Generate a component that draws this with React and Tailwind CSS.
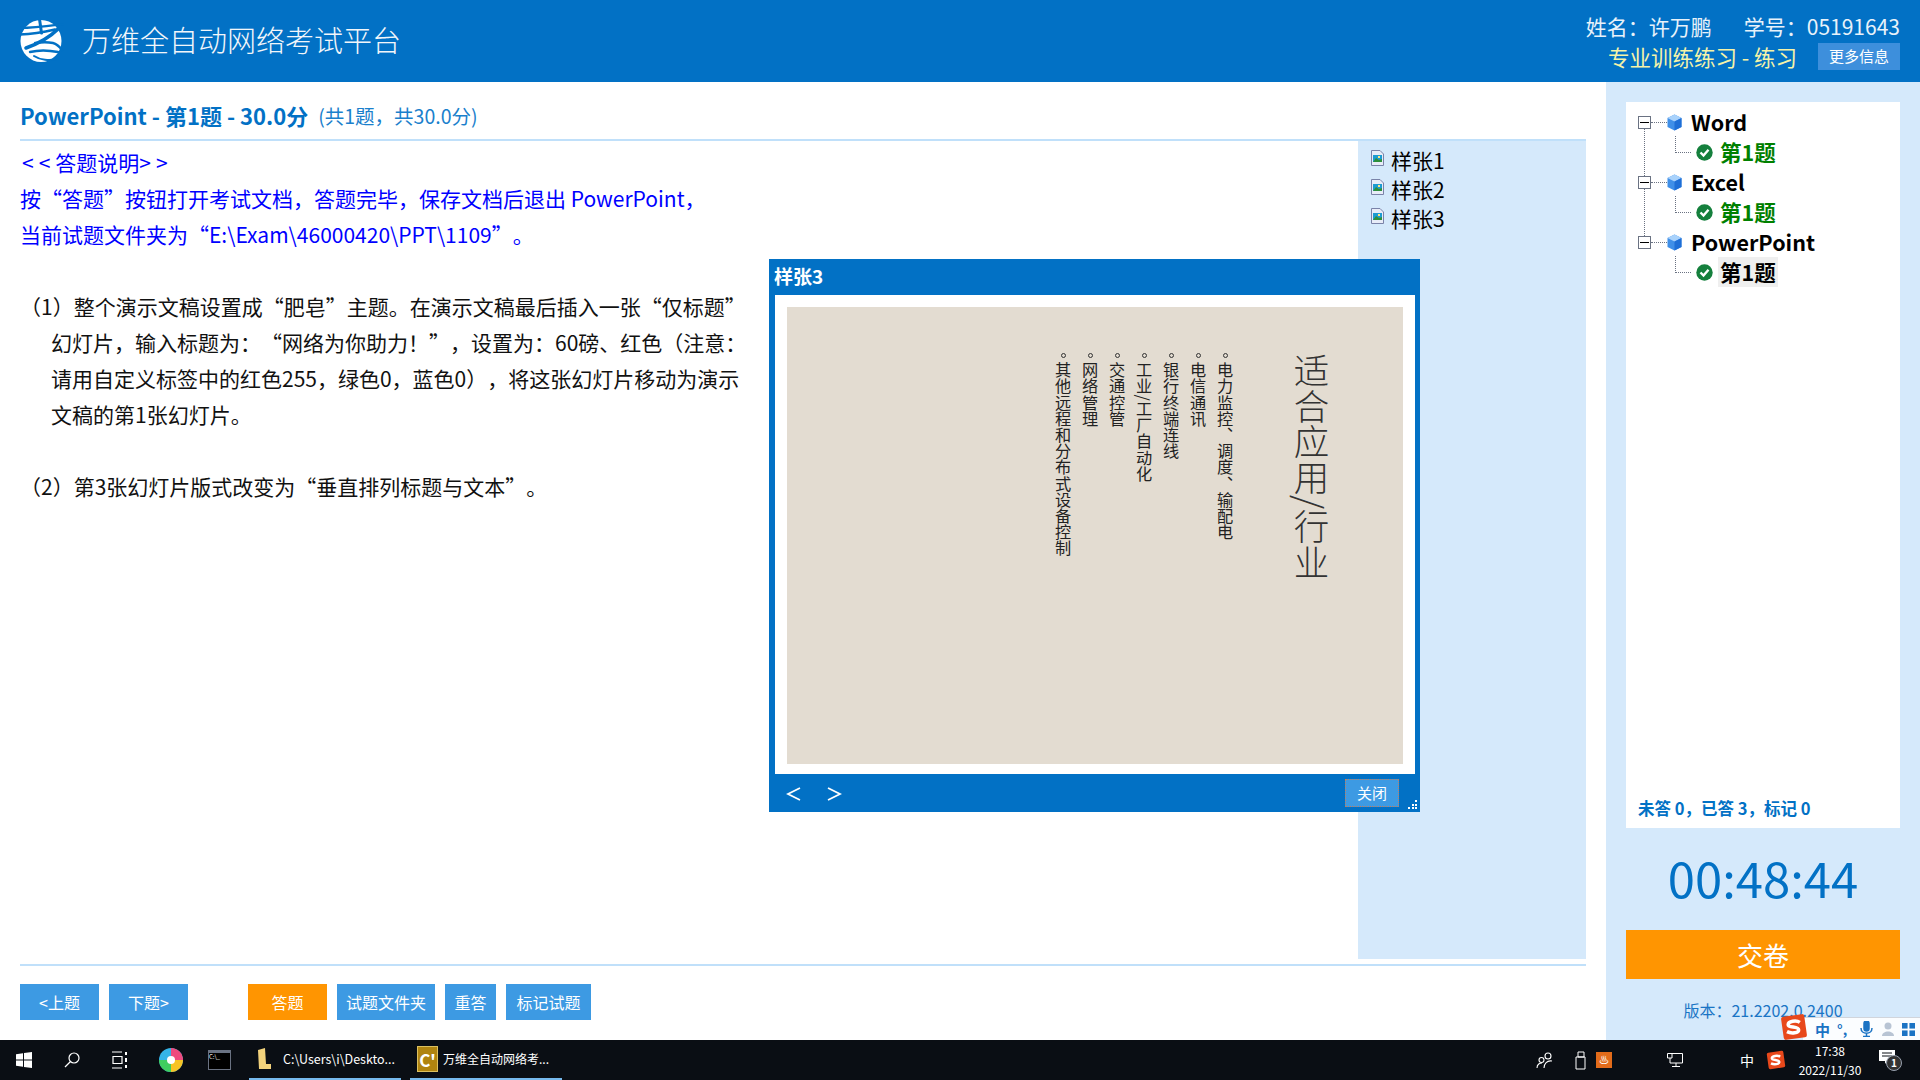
import React from "react";

const font = { fontFamily: '"Noto Sans CJK SC", sans-serif' };

function Logo() {
  return (
    <svg width="44" height="44" viewBox="0 0 44 44">
      <ellipse cx="21" cy="22" rx="20.5" ry="21" fill="#fff" />
      <g fill="none" stroke="#0271c5" strokeLinecap="round">
        <path d="M0 9 C14 9 28 7 44 5" strokeWidth="2.2" />
        <path d="M0 15.5 C12 15 24 13 35 10.5" strokeWidth="2.4" />
        <path d="M19.5 0 L21.5 14" strokeWidth="3" />
        <path d="M38 10 C30 18 20 24 6 29" strokeWidth="3.6" />
        <path d="M15 24 C22 23 28 23 33 24 C37 25 39 27 42 31" strokeWidth="2.4" />
        <path d="M10 33 C18 31 28 31 38 33" strokeWidth="2.4" />
        <path d="M14 37 C20 41 30 42 36 40" strokeWidth="2" />
      </g>
    </svg>
  );
}

function Cube() {
  return (
    <svg width="15" height="17" viewBox="0 0 15 17">
      <path d="M7.5 0.5 L14.5 4 L14.5 13 L7.5 16.5 L0.5 13 L0.5 4Z" fill="#3f8fe8" />
      <path d="M7.5 0.5 L14.5 4 L7.5 7.5 L0.5 4Z" fill="#a9d2fb" />
      <path d="M7.5 7.5 L14.5 4 L14.5 13 L7.5 16.5Z" fill="#1f6fd6" />
    </svg>
  );
}

function Check() {
  return (
    <svg width="17" height="17" viewBox="0 0 17 17">
      <circle cx="8.5" cy="8.5" r="8.2" fill="#15803d" />
      <path d="M4.5 8.5 L7.5 11.5 L12.5 5.8" fill="none" stroke="#fff" strokeWidth="2.4" />
    </svg>
  );
}

function PicFile() {
  return (
    <svg width="13" height="16" viewBox="0 0 13 16">
      <path d="M0.5 0.5 H9 L12.5 4 V15.5 H0.5Z" fill="#e8ecf8" stroke="#7a83a8" />
      <rect x="2" y="5" width="9" height="7" fill="#1d9bd1" />
      <path d="M2 12 L5 8 L8 10 L11 9 V12Z" fill="#2f8f3a" />
      <rect x="7" y="6" width="2" height="2" fill="#ffe680" />
    </svg>
  );
}

function TreeGroup({ name, selected }) {
  return (
    <div>
      <div className="h-[30px] flex items-center">
        <span className="w-[13px] h-[13px] border border-gray-500 bg-white flex items-center justify-center">
          <span className="w-[9px] h-[1px] bg-black"></span>
        </span>
        <span className="w-4 border-t border-dotted border-gray-500"></span>
        <Cube />
        <span className="ml-[9px] text-[21.5px] font-bold text-black">{name}</span>
      </div>
      <div className="h-[30px] flex items-center pl-[37px]">
        <span className="w-[16px] h-[17px] mb-[16px] border-l border-b border-dotted border-gray-500"></span>
        <span className="ml-[5px]"><Check /></span>
        <span
          className={
            selected
              ? "ml-[5px] px-[2px] text-[21.5px] leading-[30px] font-bold text-black bg-[#efefef]"
              : "ml-[5px] px-[2px] text-[21.5px] leading-[30px] font-bold text-[#008000]"
          }
        >
          第1题
        </span>
      </div>
    </div>
  );
}

function ActionButton({ label, orange, width }) {
  return (
    <button
      className={
        (orange ? "bg-[#ff9501] " : "bg-[#3d9ae3] ") +
        "h-9 text-white text-[16px] flex items-center justify-center"
      }
      style={{ width }}
    >
      {label}
    </button>
  );
}

function SlideColumn({ text, mr }) {
  return (
    <div className={"flex flex-col items-center w-[16px] " + mr}>
      <span className="w-[5px] h-[5px] rounded-full border border-[#333] mb-[4px]"></span>
      <span className="[writing-mode:vertical-rl] text-[16.2px] leading-[16px] text-[#222] whitespace-nowrap">
        {text}
      </span>
    </div>
  );
}

function SogouIcon({ size }) {
  return (
    <svg width={size} height={size} viewBox="0 0 24 24">
      <rect x="2" y="2" width="20" height="20" rx="2" fill="#e8481b" transform="rotate(-8 12 12)" />
      <path d="M17 8 C14 6 7 7 7 10 C7 13 16 11 16 14.5 C16 17 10 18 6 16" fill="none" stroke="#fff" strokeWidth="3" />
    </svg>
  );
}

function Taskbar() {
  return (
    <div className="h-10 bg-[#0a0e14] flex items-center text-white relative">
      <svg className="ml-4" width="16" height="16" viewBox="0 0 16 16">
        <path d="M0 2.2 L7 1.2 V7.5 H0Z M8 1 L16 0 V7.5 H8Z M0 8.5 H7 V14.8 L0 13.8Z M8 8.5 H16 V16 L8 15Z" fill="#fff" />
      </svg>
      <svg className="ml-8" width="16" height="16" viewBox="0 0 16 16" fill="none" stroke="#fff" strokeWidth="1.2">
        <circle cx="10" cy="6" r="5" />
        <path d="M6.5 9.5 L1 15" />
      </svg>
      <svg className="ml-8" width="16" height="18" viewBox="0 0 16 18" fill="none" stroke="#fff" strokeWidth="1.2">
        <path d="M0 1 H10 M0 17 H10 M1 5.5 H10 V12.5 H1Z" />
        <path d="M14 1 V4 M14 7 V11 M14 14 V17" strokeWidth="2" />
      </svg>
      <svg className="ml-[31px]" width="24" height="28" viewBox="0 0 24 28">
        <circle cx="12" cy="14" r="12" fill="#34b4e8" />
        <path d="M12 2 A12 12 0 0 1 24 14 L12 14Z" fill="#ee4b7e" />
        <path d="M24 14 A12 12 0 0 1 12 26 L12 14Z" fill="#f7c325" />
        <path d="M12 26 A12 12 0 0 1 0 14 L12 14Z" fill="#3fce5f" />
        <circle cx="12" cy="14" r="4" fill="#fff" />
      </svg>
      <div className="ml-[25px] w-[23px] h-[20px] bg-black border border-gray-500 border-t-[3px] flex">
        <span className="text-[6px] leading-[8px] text-white">C:\_</span>
      </div>
      <div className="absolute left-[249px] top-0 h-10 w-[152px] border-b-2 border-[#76b9ed] flex items-center">
        <svg className="ml-2" width="14" height="22" viewBox="0 0 14 22">
          <path d="M1 2 L8 0 L9 16 H14 V21 H2Z" fill="#f2d27c" />
        </svg>
        <span className="ml-[12px] text-[12.5px] whitespace-nowrap">C:\Users\i\Deskto...</span>
      </div>
      <div className="absolute left-[410px] top-0 h-10 w-[152px] border-b-2 border-[#76b9ed] flex items-center">
        <div className="ml-[7px] w-[21px] h-[26px] bg-[#b08410] border border-[#dcc060] flex items-center justify-center text-[17px] leading-none font-bold text-white">
          C'
        </div>
        <span className="ml-[5px] text-[12px] whitespace-nowrap">万维全自动网络考...</span>
      </div>

      <div className="ml-auto flex items-center h-full">
        <svg width="18" height="18" viewBox="0 0 18 18" fill="none" stroke="#fff" strokeWidth="1.1">
          <circle cx="12" cy="5" r="3" />
          <circle cx="5.5" cy="9" r="2.5" />
          <path d="M1 17 C1 13 4 12 6 12 M8 17 C8 13 11 9 16 10" />
        </svg>
        <svg className="ml-[21px]" width="14" height="19" viewBox="0 0 14 19" fill="none" stroke="#fff" strokeWidth="1">
          <path d="M3 1 H9 V6 H3Z M1 6 H10 V18 H1Z" />
        </svg>
        <div className="ml-[7px] w-4 h-4 bg-[#e26b1a] flex items-center justify-center text-[10px] leading-none">♨</div>
        <svg className="ml-[55px]" width="16" height="14" viewBox="0 0 16 14" fill="none" stroke="#fff" strokeWidth="1">
          <path d="M3 0.5 H15.5 V10 H3 M0.5 0.5 H5 V5 H0.5Z M3 5 V10 M9 10 V13.5 M5 13.5 H13" />
        </svg>
        <span className="ml-[57px] text-[14px]">中</span>
        <span className="ml-[12px] flex"><SogouIcon size={20} /></span>
        <div className="ml-[4px] w-[80px] text-center text-[12px] leading-[19px]">
          <div>17:38</div>
          <div>2022/11/30</div>
        </div>
        <div className="ml-[9px] mr-[21px] relative w-5 h-5">
          <svg width="16" height="15" viewBox="0 0 16 15">
            <path d="M0 0 H16 V11 H8 L6 14 V11 H0Z" fill="#fff" />
            <path d="M3 3 H13 M3 6 H13" stroke="#0a0e14" />
          </svg>
          <span className="absolute left-[7px] top-[5px] w-4 h-4 rounded-full bg-[#333] border border-gray-400 text-[10px] leading-[14px] text-center font-bold">1</span>
        </div>
      </div>
    </div>
  );
}

export default function App() {
  return (
    <div className="w-[1920px] h-[1080px] flex flex-col overflow-hidden relative bg-white [text-spacing-trim:space-all]" style={font}>
      <header className="h-[82px] bg-[#0271c5] flex items-center justify-between pl-[20px] pr-5">
        <div className="flex items-center">
          <Logo />
          <span className="ml-[18px] -mt-[2px] text-[29px] font-light text-[#f2f6fa]">万维全自动网络考试平台</span>
        </div>
        <div className="flex flex-col items-end">
          <div className="text-[21px] leading-[30px] text-[#e8f2fa] flex gap-[32px] -mt-[2px]">
            <span>姓名：许万鹏</span>
            <span>学号：05191643</span>
          </div>
          <div className="flex items-center mt-[2px]">
            <span className="text-[21.5px] leading-[27px] text-[#f5f3a8]">专业训练练习 - 练习</span>
            <button className="ml-[21px] w-[82px] h-[27px] bg-[#3d8fdc] text-[15px] text-white flex items-center justify-center">
              更多信息
            </button>
          </div>
        </div>
      </header>

      <div className="flex-1 flex min-h-0">
        <main className="w-[1606px] px-5 flex flex-col">
          <div className="h-[59px] shrink-0 border-b-2 border-[#c0e0fa] flex items-center pt-[10px]">
            <span className="text-[22px] font-bold text-[#0271c5]">PowerPoint - 第1题 - 30.0分</span>
            <span className="ml-[10px] text-[19.5px] text-[#1a80cc]">(共1题，共30.0分)</span>
          </div>
          <div className="h-[825px] shrink-0 flex border-b-2 border-[#c0e0fa]">
            <div className="flex-1 pt-[3px] mb-[5px] text-[21px] leading-[36px]">
              <div className="text-[#0000ff] whitespace-nowrap">
                <div>
                  <span className="tracking-[5px] ml-[2px]">&lt;&lt;</span>答题说明<span className="tracking-[5px]">&gt;&gt;</span>
                </div>
                <div>按“答题”按钮打开考试文档，答题完毕，保存文档后退出 PowerPoint，</div>
                <div>当前试题文件夹为“E:\Exam\46000420\PPT\1109”。</div>
              </div>
              <div className="mt-[36px] text-[#111] whitespace-nowrap">
                <div>（1）整个演示文稿设置成“肥皂”主题。在演示文稿最后插入一张“仅标题”</div>
                <div className="pl-[31px]">幻灯片，输入标题为：“网络为你助力！”，设置为：60磅、红色（注意：</div>
                <div className="pl-[31px]">请用自定义标签中的红色255，绿色0，蓝色0），将这张幻灯片移动为演示</div>
                <div className="pl-[31px]">文稿的第1张幻灯片。</div>
                <div className="mt-[36px]">（2）第3张幻灯片版式改变为“垂直排列标题与文本”。</div>
              </div>
            </div>
            <div className="w-[228px] mb-[5px] bg-[#d5e9fb] pl-[13px] pt-[5px]">
              {["样张1", "样张2", "样张3"].map((s) => (
                <div key={s} className="h-[29px] flex items-center text-[21px] text-black">
                  <span className="mb-[6px] flex"><PicFile /></span>
                  <span className="ml-[7px]">{s}</span>
                </div>
              ))}
            </div>
          </div>
          <div className="flex-1 flex items-center gap-[10px] pb-[2px]">
            <ActionButton label="<上题" width={79} />
            <ActionButton label="下题>" width={79} />
            <span className="w-[40px]"></span>
            <ActionButton label="答题" orange width={79} />
            <ActionButton label="试题文件夹" width={98} />
            <ActionButton label="重答" width={51} />
            <ActionButton label="标记试题" width={85} />
          </div>
        </main>

        <aside className="flex-1 bg-[#d5e9fb] px-5 pt-5 flex flex-col items-stretch">
          <div className="h-[726px] bg-white flex flex-col justify-between px-3 pt-[5px] pb-[7px]">
            <div className="relative">
              <span className="absolute left-[6px] top-[15px] h-[120px] border-l border-dotted border-gray-500"></span>
              <div className="relative">
                <TreeGroup name="Word" />
                <TreeGroup name="Excel" />
                <TreeGroup name="PowerPoint" selected />
              </div>
            </div>
            <div className="text-[16.5px] font-bold text-[#0271c5]">未答 0，已答 3，标记 0</div>
          </div>
          <div className="h-[102px] pb-[5px] flex items-center justify-center text-[49px] text-[#0271c5]">00:48:44</div>
          <button className="h-[49px] bg-[#ff9501] text-[26px] text-white flex items-center justify-center">交卷</button>
          <div className="mt-[19px] text-center text-[16px] text-[#1a75c5]">版本：21.2202.0.2400</div>
        </aside>
      </div>

      <Taskbar />

      <div className="absolute left-[769px] top-[259px] w-[651px] h-[553px] bg-[#0271c5] flex flex-col">
        <div className="h-[36px] flex items-center pl-[5px] pb-[2px] text-[19px] font-bold text-white">样张3</div>
        <div className="ml-[6px] mr-[5px] h-[479px] bg-white p-[12px]">
          <div className="h-[457px] bg-[#e3dcd1] flex flex-row-reverse pt-[46px] pr-[74px]">
            <div className="[writing-mode:vertical-rl] text-[35.5px] leading-[36px] font-light text-[#333] whitespace-nowrap">
              适合应用/行业
            </div>
            <SlideColumn text="电力监控、调度、输配电" mr="mr-[60px]" />
            <SlideColumn text="电信通讯" mr="mr-[11px]" />
            <SlideColumn text="银行终端连线" mr="mr-[11px]" />
            <SlideColumn text="工业/工厂自动化" mr="mr-[11px]" />
            <SlideColumn text="交通控管" mr="mr-[11px]" />
            <SlideColumn text="网络管理" mr="mr-[11px]" />
            <SlideColumn text="其他远程和分布式设备控制" mr="mr-[11px]" />
          </div>
        </div>
        <div className="flex-1 flex items-center pl-[17px] pt-[2px] relative">
          <svg width="16" height="16" viewBox="0 0 16 16" fill="none" stroke="#fff" strokeWidth="1.8">
            <path d="M14 2 L2 8 L14 14" />
          </svg>
          <svg className="ml-6" width="16" height="16" viewBox="0 0 16 16" fill="none" stroke="#fff" strokeWidth="1.8">
            <path d="M2 2 L14 8 L2 14" />
          </svg>
          <button className="absolute left-[576px] top-[5px] w-[54px] h-[28px] bg-[#3d9ae3] border border-dotted border-[#c08060] text-[15px] text-white flex items-center justify-center">
            关闭
          </button>
          <svg className="absolute right-[2px] bottom-[2px]" width="10" height="10" viewBox="0 0 10 10" fill="#fff">
            <rect x="7" y="0" width="2" height="2" />
            <rect x="4" y="4" width="2" height="2" />
            <rect x="7" y="4" width="2" height="2" />
            <rect x="0" y="7" width="2" height="2" />
            <rect x="4" y="7" width="2" height="2" />
            <rect x="7" y="7" width="2" height="2" />
          </svg>
        </div>
      </div>

      <div className="absolute left-[1780px] top-[1013px] w-[140px] h-[27px] flex items-end">
        <span className="absolute left-0 top-0 z-10 flex"><SogouIcon size={28} /></span>
        <div className="ml-[23px] flex-1 h-[23px] bg-white/90 border-t border-gray-300 flex items-center">
          <span className="ml-[12px] w-[14px] text-[15px] font-bold text-[#1b73c4] leading-none">中</span>
          <span className="ml-[8px] w-[12px] text-[14px] font-bold text-[#1b73c4] leading-none">°,</span>
          <svg className="ml-[11px]" width="13" height="16" viewBox="0 0 13 16" fill="none" stroke="#1b73c4" strokeWidth="1.5">
            <rect x="4" y="0" width="5" height="10" rx="2.5" fill="#1b73c4" />
            <path d="M1 7 C1 14 12 14 12 7 M6.5 12 V16 M3 15.5 H10" />
          </svg>
          <svg className="ml-[9px]" width="13" height="15" viewBox="0 0 13 15" fill="#b8c4d4">
            <circle cx="6" cy="4" r="3.5" />
            <path d="M0 14 C0 8 12 8 12 14Z" />
          </svg>
          <svg className="ml-[7px]" width="13" height="13" viewBox="0 0 14 14" fill="#1b73c4">
            <rect x="0" y="0" width="6" height="6" />
            <rect x="8" y="0" width="6" height="6" />
            <rect x="0" y="8" width="6" height="6" />
            <rect x="8" y="8" width="6" height="6" />
          </svg>
        </div>
      </div>
    </div>
  );
}
